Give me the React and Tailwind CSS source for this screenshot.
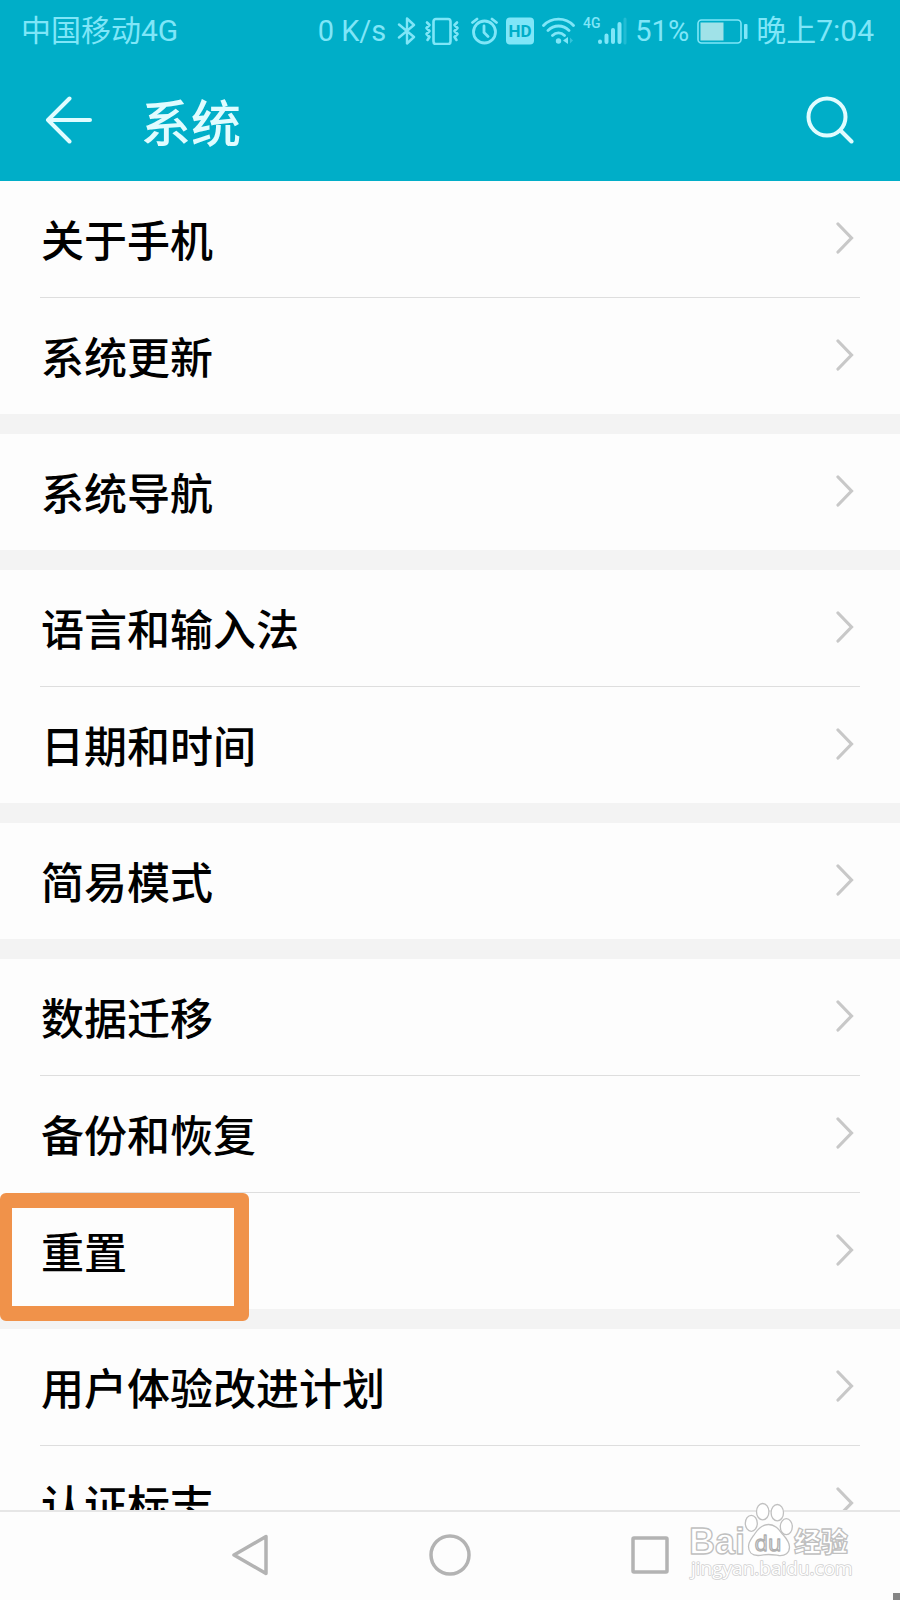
import { Fragment } from 'react';

const groups = [
  ['关于手机', '系统更新'],
  ['系统导航'],
  ['语言和输入法', '日期和时间'],
  ['简易模式'],
  ['数据迁移', '备份和恢复', '重置'],
  ['用户体验改进计划', '认证标志'],
];

const HIGHLIGHTED = '重置';

function StatusBar() {
  return (
    <div className="flex items-center justify-between h-[61px] pl-[21px] pr-[26px] leading-8 text-[#7fe6f8] font-[Roboto,'Noto_Sans_CJK_SC',sans-serif]">
      <span className="text-[30px]">中国移动4G</span>
      <div className="flex items-center gap-2">
        <span className="text-[29px]">0 K/s</span>

        {/* bluetooth */}
        <svg width="22" height="28" viewBox="-4 0 22 28" fill="none" stroke="currentColor" strokeWidth="2.400" strokeLinejoin="round" strokeLinecap="round">
          <path d="M1 7.500 16 20 9 26.500V1.500L16 8 1 20.500" />
        </svg>

        {/* vibrate */}
        <svg width="36" height="28" viewBox="0 0 36 28" fill="none" stroke="currentColor" strokeWidth="2.600" strokeLinejoin="round" strokeLinecap="round">
          <rect x="9.500" y="2" width="17" height="25" rx="2.500" />
          <path d="M3 5.500 5.500 8 2.500 11 5.500 14 2.500 17 5.500 20 3.500 23M33 5.500 30.500 8 33.500 11 30.500 14 33.500 17 30.500 20 32.500 23" />
        </svg>

        {/* alarm */}
        <svg width="30" height="28" viewBox="-3 0 30 28" fill="none" stroke="currentColor" strokeWidth="2.800" strokeLinecap="round">
          <circle cx="13.500" cy="15" r="11" />
          <path d="M13 9v6.500l4 4M1.500 5.500 6 2M25.500 5.500 21 2" />
        </svg>

        {/* HD */}
        <svg width="28" height="28" viewBox="0 0 28 28">
          <rect y="0.500" width="28" height="27" rx="4" fill="currentColor" />
          <text x="14" y="20" textAnchor="middle" fontSize="17" fontWeight="700" fill="#00aec8">HD</text>
        </svg>

        {/* wifi */}
        <svg width="33" height="28" viewBox="0 0 33 28" fill="none" stroke="currentColor" strokeWidth="2.800" strokeLinecap="round">
          <path d="M1.500 8.500C9.500 0 23.500 0 31.500 8.500M6 13.500c6-6 15-6 21 0M10.500 18.500c3.500-3.500 8.500-3.500 12 0" />
          <circle cx="16.500" cy="24" r="2.700" fill="currentColor" stroke="none" />
          <path d="M26 20v7l-5-3.500z" fill="currentColor" stroke="none" />
          <path d="M28 20.500l3 3-3 3z" fill="currentColor" stroke="none" opacity="0.400" />
        </svg>

        {/* mobile signal */}
        <svg width="44" height="28" viewBox="0 0 44 28" fill="none" stroke="currentColor" strokeWidth="4" strokeLinecap="round">
          <text x="0" y="11" fontSize="14" fontWeight="500" fill="currentColor" stroke="none">4G</text>
          <path d="M17 24.500v0.500M23.500 18.500v6.500M30 13v12M36.500 7v18" />
          <path d="M42 2v24" strokeWidth="3" opacity="0.250" />
        </svg>

        <span className="text-[29px]">51%</span>

        {/* battery */}
        <svg width="51" height="28" viewBox="0 0 51 28" fill="none">
          <rect x="1" y="3" width="43" height="23" rx="3.500" stroke="currentColor" strokeWidth="1.600" />
          <rect x="3.500" y="5.500" width="23" height="18" fill="#a0e2e8" />
          <rect x="47" y="7" width="3.500" height="15" rx="1" fill="currentColor" />
        </svg>

        <span className="text-[30px]">晚上7:04</span>
      </div>
    </div>
  );
}

function Header() {
  return (
    <header className="shrink-0 h-[181px] bg-[#00aec8]">
      <StatusBar />
      <div className="flex items-center h-[117px] pl-[45px] pr-[46px] text-[#e0fcff]">
        <button type="button" aria-label="返回">
          <svg className="block" width="48" height="48" viewBox="0 0 48 48" fill="none" stroke="currentColor" strokeWidth="4" strokeLinecap="round" strokeLinejoin="round">
            <path d="M24.500 2.500 3 24l21.500 21.500M3 24h42" />
          </svg>
        </button>
        <h1 className="ml-12 text-[50px] leading-[60px] font-medium">系统</h1>
        <button type="button" aria-label="搜索" className="ml-auto">
          <svg className="block" width="48" height="48" viewBox="0 0 48 48" fill="none" stroke="currentColor" strokeWidth="4" strokeLinecap="round">
            <circle cx="21" cy="21" r="18.500" />
            <path d="M34.500 34.500 45.500 45.500" />
          </svg>
        </button>
      </div>
    </header>
  );
}

function Row({ label }) {
  return (
    <li className="relative mx-10">
      <a href="#" className="flex items-center justify-between h-[116px] pl-px pr-[6px] pb-0.5">
        <span className="text-[43px] leading-[60px] font-medium">{label}</span>
        <svg width="18" height="32" viewBox="0 0 18 32" fill="none" stroke="#c8c8c8" strokeWidth="3.200" strokeLinecap="round" strokeLinejoin="miter">
          <path d="M2 2 15.500 16 2 30" />
        </svg>
      </a>
      {label === HIGHLIGHTED && (
        <div className="absolute top-0 -left-10 z-10 w-[249px] h-32 rounded-md border-[15px] border-l-12 border-[#f0924a] pointer-events-none" />
      )}
    </li>
  );
}

function NavBar() {
  return (
    <nav className="shrink-0 flex items-center justify-center h-[90px] pb-0.5 border-t-2 border-[#e6e6e6] bg-[#fdfdfd] text-[#b3b3b3]">
      <button type="button" aria-label="后退" className="w-2/9 flex justify-center">
        <svg width="44" height="44" viewBox="0 0 44 44" fill="none" stroke="currentColor" strokeWidth="3.500" strokeLinejoin="round">
          <path d="M38 3.500v37L6 22z" />
        </svg>
      </button>
      <button type="button" aria-label="主屏幕" className="w-2/9 flex justify-center">
        <svg width="44" height="44" viewBox="0 0 44 44" fill="none" stroke="currentColor" strokeWidth="3.500">
          <circle cx="22" cy="22" r="19" />
        </svg>
      </button>
      <button type="button" aria-label="最近任务" className="w-2/9 flex justify-center">
        <svg width="44" height="44" viewBox="0 0 44 44" fill="none" stroke="currentColor" strokeWidth="3.500">
          <rect x="5" y="5" width="34" height="34" rx="1" />
        </svg>
      </button>
    </nav>
  );
}

function Watermark() {
  return (
    <svg className="absolute right-[42px] bottom-[14px] pointer-events-none" width="170" height="86" viewBox="0 0 170 86" fill="#fff" stroke="#c0c0c0" strokeWidth="1.300" strokeLinejoin="round">
      <text x="1" y="54" fontSize="36" fontWeight="700" fontFamily="Liberation Sans, sans-serif">Bai</text>
      <text x="106" y="52" fontSize="27" fontWeight="900" fontFamily="Noto Sans CJK SC, sans-serif">经验</text>
      <ellipse cx="74.700" cy="11.700" rx="6.200" ry="8.200" />
      <ellipse cx="89.300" cy="12.700" rx="6.200" ry="8.200" />
      <ellipse cx="63.300" cy="23.300" rx="6" ry="8" />
      <ellipse cx="98.300" cy="26.700" rx="6" ry="8" />
      <path d="M80.500 24.500C87 24.500 90.500 29 94 33.500C97.500 37.500 101.500 41.500 101.500 47C101.500 53 97 56 91 55.500C87 55 84 54.500 80.500 54.500C77 54.500 74 55.500 70 55.500C64 55.500 60.500 52 60.500 46.500C60.500 41.500 64 38 67 33.500C70 29 74 24.500 80.500 24.500Z" />
      <text x="80" y="50.500" textAnchor="middle" fontSize="22" fontFamily="Open Sans, sans-serif" stroke="#b0b0b0">du</text>
      <text x="3" y="75" fontSize="19" fontFamily="Open Sans, sans-serif" stroke="#d0d0d0" strokeWidth="1.600" paintOrder="stroke">jingyan.baidu.com</text>
    </svg>
  );
}

export default function App() {
  return (
    <div className="relative flex flex-col h-screen overflow-hidden bg-[#f3f3f3] text-black font-['Noto_Sans_CJK_SC',sans-serif]">
      <Header />
      <main className="flex-1 min-h-0 overflow-hidden flex flex-col gap-5">
        {groups.map((items) => (
          <ul key={items[0]} className="shrink-0 bg-[#fdfdfd]">
            {items.map((label, i) => (
              <Fragment key={label}>
                {i > 0 && <li role="separator" className="mx-10 h-px bg-[#dedede]" />}
                <Row label={label} />
              </Fragment>
            ))}
          </ul>
        ))}
      </main>
      <NavBar />
      <Watermark />
      <div className="absolute right-0 bottom-0 size-[7px] bg-[#858585]" />
    </div>
  );
}
